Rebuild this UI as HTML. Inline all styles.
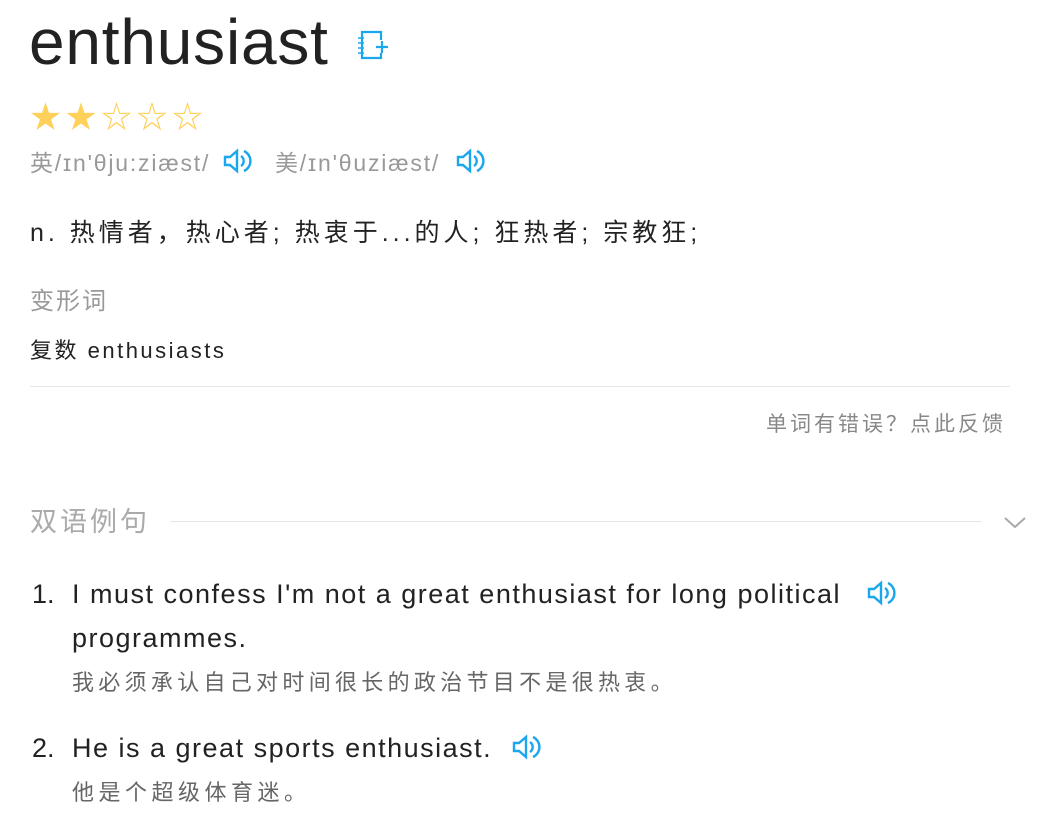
<!DOCTYPE html>
<html><head><meta charset="utf-8"><style>
*{margin:0;padding:0;box-sizing:border-box}
body{width:1056px;height:828px;background:#fff;font-family:"Liberation Sans","Noto Sans CJK SC",sans-serif;color:#333;position:relative;overflow:hidden}
.a{position:absolute;white-space:nowrap}
.g{color:#999}
</style></head><body>
<div class="a" style="left:29px;top:2px;font-size:64px;letter-spacing:0.8px;color:#222;line-height:80px">enthusiast</div>
<svg class="a" style="left:356px;top:30px" width="34" height="32" viewBox="0 0 34 32" fill="none" stroke="#1aa7ee" stroke-width="2.2">
<path d="M25 10V2H6V28H25V23"/><path d="M2 8h6M2 13h6M2 18h6M2 23h6" stroke-width="1.6"/><path d="M20 17h12M26 11v12"/></svg>
<div class="a" style="left:30px;top:100px;font-size:31px;color:#ffd05a;letter-spacing:4.5px;line-height:36px">★★☆☆☆</div>
<div class="a g" style="left:30px;top:148px;font-size:23px;line-height:30px;letter-spacing:1.8px">英/ɪn'θju:ziæst/</div>
<svg class="a" style="left:222px;top:148px" width="32" height="26" viewBox="0 0 32 26" fill="none" stroke="#1aa7ee" stroke-width="2.4"><path d="M3 9H8L15 3V23L8 17H3Z"/><path d="M19 8a6 6 0 0 1 0 10M22 3a11 11 0 0 1 0 20"/></svg>
<div class="a g" style="left:275px;top:148px;font-size:23px;line-height:30px;letter-spacing:1.8px">美/ɪn'θuziæst/</div>
<svg class="a" style="left:455px;top:148px" width="32" height="26" viewBox="0 0 32 26" fill="none" stroke="#1aa7ee" stroke-width="2.4"><path d="M3 9H8L15 3V23L8 17H3Z"/><path d="M19 8a6 6 0 0 1 0 10M22 3a11 11 0 0 1 0 20"/></svg>
<div class="a" style="left:30px;top:216px;font-size:25px;line-height:34px;color:#222;letter-spacing:4px">n. 热情者，热心者; 热衷于...的人; 狂热者; 宗教狂;</div>
<div class="a g" style="left:30px;top:287px;font-size:24px;line-height:30px;letter-spacing:2px">变形词</div>
<div class="a" style="left:30px;top:336px;font-size:22px;line-height:30px;color:#222;letter-spacing:2.5px">复数 enthusiasts</div>
<div class="a" style="left:30px;top:386px;width:980px;height:1px;background:#e6e6e6"></div>
<div class="a g" style="right:50px;top:411px;font-size:21px;line-height:28px;color:#888;letter-spacing:3px">单词有错误？点此反馈</div>
<div class="a g" style="left:30px;top:504px;font-size:27px;line-height:36px;color:#aaa;letter-spacing:3px">双语例句</div>
<div class="a" style="left:170px;top:521px;width:812px;height:1px;background:#e6e6e6"></div>
<svg class="a" style="left:1003px;top:514px" width="24" height="16" viewBox="0 0 24 16" fill="none" stroke="#aaa" stroke-width="2"><path d="M2 4l10 9 10-9"/></svg>
<div class="a" style="left:32px;top:572px;font-size:27px;line-height:44px;color:#222">1.</div>
<div class="a" style="left:72px;top:572px;font-size:27px;line-height:44px;color:#222;letter-spacing:1.5px">I must confess I'm not a great enthusiast for long political</div>
<svg class="a" style="left:866px;top:580px" width="32" height="26" viewBox="0 0 32 26" fill="none" stroke="#1aa7ee" stroke-width="2.4"><path d="M3 9H8L15 3V23L8 17H3Z"/><path d="M19 8a6 6 0 0 1 0 10M22 3a11 11 0 0 1 0 20"/></svg>
<div class="a" style="left:72px;top:616px;font-size:27px;line-height:44px;color:#222;letter-spacing:1.5px">programmes.</div>
<div class="a" style="left:72px;top:668px;font-size:22px;line-height:30px;color:#666;letter-spacing:4.3px">我必须承认自己对时间很长的政治节目不是很热衷。</div>
<div class="a" style="left:32px;top:726px;font-size:27px;line-height:44px;color:#222">2.</div>
<div class="a" style="left:72px;top:726px;font-size:27px;line-height:44px;color:#222;letter-spacing:1.5px">He is a great sports enthusiast.</div>
<svg class="a" style="left:511px;top:734px" width="32" height="26" viewBox="0 0 32 26" fill="none" stroke="#1aa7ee" stroke-width="2.4"><path d="M3 9H8L15 3V23L8 17H3Z"/><path d="M19 8a6 6 0 0 1 0 10M22 3a11 11 0 0 1 0 20"/></svg>
<div class="a" style="left:72px;top:778px;font-size:22px;line-height:30px;color:#666;letter-spacing:4.5px">他是个超级体育迷。</div>
</body></html>
